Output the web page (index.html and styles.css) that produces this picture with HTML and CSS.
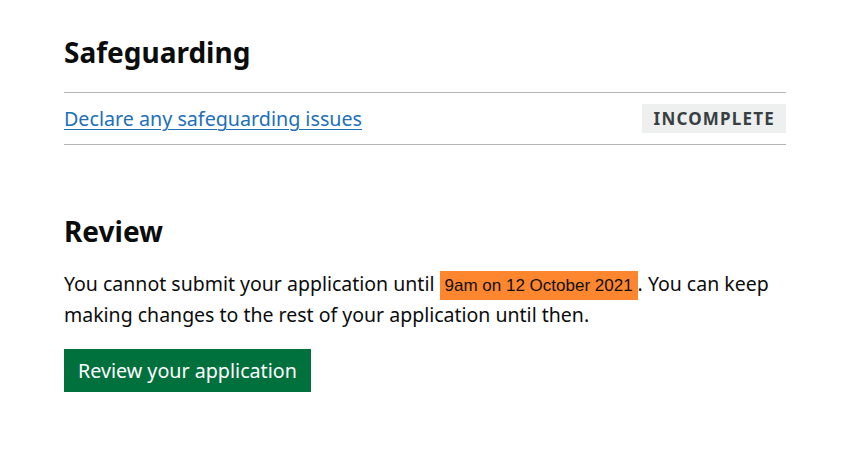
FILE: index.html
```html
<!DOCTYPE html>
<html lang="en">
<head>
<meta charset="utf-8">
<title>Application</title>
<link rel="stylesheet" href="styles.css">
</head>
<body>
<main class="page">
  <h2 class="heading">Safeguarding</h2>
  <ul class="task-list">
    <li class="task-item">
      <a class="task-link" href="#">Declare any safeguarding issues</a>
      <strong class="tag">Incomplete</strong>
    </li>
  </ul>

  <h2 class="heading heading-review">Review</h2>
  <p class="body">You cannot submit your application until <span class="highlight">9am on 12 October 2021</span>. You can keep making changes to the rest of your application until then.</p>
  <button class="button" type="button">Review your application</button>
</main>
</body>
</html>
```

FILE: styles.css
```css
* { box-sizing: border-box; }
body {
  margin: 0;
  background: #ffffff;
  color: #0b0c0c;
  font-family: "Noto Sans", "Liberation Sans", sans-serif;
}
.page {
  width: 722px;
  margin-left: 64px;
  padding-top: 32px;
}
.heading {
  margin: 0 0 20px;
  font-size: 28px;
  line-height: 40px;
  font-weight: 700;
}
.task-list {
  list-style: none;
  margin: 0;
  padding: 0;
  border-top: 1px solid #b1b4b6;
}
.task-item {
  display: flex;
  align-items: center;
  justify-content: space-between;
  height: 52px;
  border-bottom: 1px solid #b1b4b6;
}
.task-link {
  color: #1d70b8;
  font-size: 19.7px;
  line-height: 25px;
  text-decoration: underline;
  text-decoration-thickness: 1px;
  text-underline-offset: 3px;
}
.tag {
  display: inline-block;
  padding: 4px 11px 4px 12px;
  background: #eeefef;
  color: #383f43;
  font-size: 17px;
  line-height: 21px;
  font-weight: 700;
  letter-spacing: 1.2px;
  text-transform: uppercase;
}
.heading-review {
  margin-top: 66px;
  margin-bottom: 18px;
}
.body {
  margin: 0 0 20px;
  font-size: 19.5px;
  line-height: 29px;
}
.highlight {
  display: inline-block;
  background: #fd862f;
  padding: 0 5px;
  font-family: "Liberation Sans Narrow", "Liberation Sans", sans-serif;
  font-size: 17px;
  line-height: 29px;
  color: #111111;
}
.button {
  display: inline-block;
  margin: 0;
  padding: 8px 14px 8px;
  border: 0;
  border-radius: 0;
  background: #00703c;
  box-shadow: 0 2px 0 #002d18;
  color: #ffffff;
  font-family: "Noto Sans", "Liberation Sans", sans-serif;
  font-size: 19.7px;
  line-height: 27px;
  cursor: pointer;
}
```
